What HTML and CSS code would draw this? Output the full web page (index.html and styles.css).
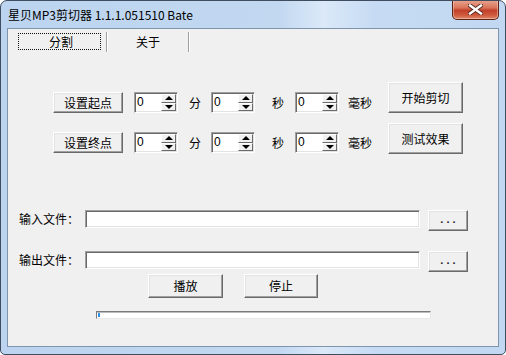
FILE: index.html
```html
<!DOCTYPE html>
<html lang="zh-CN">
<head>
<meta charset="utf-8">
<title>星贝MP3剪切器</title>
<link rel="stylesheet" href="styles.css">
</head>
<body>
<div class="window">
  <div class="titlebar">
    <span class="title">星贝MP3剪切器 1.1.1.051510 Bate</span>
    <div class="close">
      <svg width="15" height="11" viewBox="0 0 15 11">
        <path d="M2 1.5 L13 9.5 M13 1.5 L2 9.5" stroke="#5a2a20" stroke-width="4.2" stroke-linecap="square" fill="none"/>
        <path d="M2 1.5 L13 9.5 M13 1.5 L2 9.5" stroke="#ffffff" stroke-width="2.4" stroke-linecap="square" fill="none"/>
      </svg>
    </div>
  </div>
  <div class="client">
    <div class="tabs">
      <div class="tab tab-active"><span>分割</span></div>
      <div class="tab-sep"></div>
      <div class="tab tab-plain">关于</div>
      <div class="tab-sep tab-sep-last"></div>
    </div>

    <div class="cut">
      <div class="points">
        <div class="point-row">
          <div class="btn btn-point">设置起点</div>
          <div class="spin spin-a"><span class="spin-val">0</span><div class="spin-btns"><div class="spin-up"></div><div class="spin-down"></div></div></div>
          <span class="unit unit-min">分</span>
          <div class="spin spin-b"><span class="spin-val">0</span><div class="spin-btns"><div class="spin-up"></div><div class="spin-down"></div></div></div>
          <span class="unit unit-sec">秒</span>
          <div class="spin spin-c"><span class="spin-val">0</span><div class="spin-btns"><div class="spin-up"></div><div class="spin-down"></div></div></div>
          <span class="unit unit-ms">毫秒</span>
        </div>
        <div class="point-row">
          <div class="btn btn-point">设置终点</div>
          <div class="spin spin-a"><span class="spin-val">0</span><div class="spin-btns"><div class="spin-up"></div><div class="spin-down"></div></div></div>
          <span class="unit unit-min">分</span>
          <div class="spin spin-b"><span class="spin-val">0</span><div class="spin-btns"><div class="spin-up"></div><div class="spin-down"></div></div></div>
          <span class="unit unit-sec">秒</span>
          <div class="spin spin-c"><span class="spin-val">0</span><div class="spin-btns"><div class="spin-up"></div><div class="spin-down"></div></div></div>
          <span class="unit unit-ms">毫秒</span>
        </div>
      </div>
      <div class="actions">
        <div class="btn btn-action">开始剪切</div>
        <div class="btn btn-action">测试效果</div>
      </div>
    </div>

    <div class="file-row file-row-in">
      <span class="file-label">输入文件：</span>
      <div class="field file-field"></div>
      <div class="btn btn-browse">. . .</div>
    </div>
    <div class="file-row file-row-out">
      <span class="file-label">输出文件：</span>
      <div class="field file-field"></div>
      <div class="btn btn-browse">. . .</div>
    </div>

    <div class="play-row">
      <div class="btn btn-play">播放</div>
      <div class="btn btn-play btn-stop">停止</div>
    </div>

    <div class="progress"><div class="progress-fill"></div></div>
  </div>
</div>
</body>
</html>
```

FILE: styles.css
```css
html, body {
  margin: 0;
  padding: 0;
  background: #ffffff;
}

body {
  width: 506px;
  height: 355px;
  overflow: hidden;
  font-family: "Noto Sans CJK SC", "Liberation Sans", sans-serif;
  font-size: 12px;
  color: #000;
}

.window {
  box-sizing: border-box;
  width: 506px;
  height: 355px;
  border: 1px solid #3f4d5e;
  border-radius: 7px 7px 5px 5px;
  background: linear-gradient(to right, #bcd4ef 0%, #c2d8f1 55%, #dbe9f8 64%, #c6dbf3 74%, #c2d8f2 100%);
  display: flex;
  flex-direction: column;
  overflow: hidden;
}

.titlebar {
  height: 27px;
  display: flex;
  align-items: flex-start;
  padding-left: 7px;
  flex: none;
}

.title {
  margin-top: 6px;
  font-size: 12px;
  line-height: 16px;
  color: #000;
  white-space: nowrap;
}

.close {
  margin-left: auto;
  margin-right: 6px;
  margin-top: -1px;
  width: 47px;
  height: 20px;
  box-sizing: border-box;
  border: 1px solid #5b2419;
  border-top: none;
  border-radius: 0 0 5px 5px;
  background: linear-gradient(to bottom, #e9a692 0%, #d9755c 40%, #c2412a 55%, #cf5a3d 80%, #e08a6c 100%);
  box-shadow: inset 0 0 0 1px rgba(255, 220, 200, 0.45);
  display: flex;
  align-items: center;
  justify-content: center;
}

.client {
  margin: 0 6px 7px 6px;
  height: 319px;
  box-sizing: border-box;
  border: 1px solid #7f94ad;
  background: #f0f0f0;
  flex: none;
}

/* tabs */
.tabs {
  height: 24px;
  display: flex;
  align-items: flex-start;
  padding-left: 10px;
}

.tab {
  height: 17px;
  box-sizing: border-box;
  display: flex;
  align-items: center;
  justify-content: center;
  line-height: 1;
}

.tab-active {
  margin-top: 4px;
  width: 83px;
  border: 1px dotted #111;
  padding-left: 3px;
}

.tab-sep {
  margin-top: 3px;
  margin-left: 5px;
  width: 1px;
  height: 20px;
  background: #a0a0a0;
  border-right: 1px solid #ffffff;
}

.tab-sep-last {
  margin-left: 0;
}

.tab-plain {
  margin-top: 4px;
  width: 80px;
}

/* cut section */
.cut {
  margin-top: 29px;
  display: flex;
  align-items: flex-start;
}

.points {
  padding-left: 45px;
  margin-top: 10px;
  display: flex;
  flex-direction: column;
  gap: 19px;
}

.point-row {
  display: flex;
  align-items: center;
  height: 21px;
}

.btn {
  box-sizing: border-box;
  background: #f0f0f0;
  border: 1px solid;
  border-color: #ffffff #696969 #696969 #ffffff;
  box-shadow: inset -1px -1px 0 #a0a0a0, inset 1px 1px 0 #e3e3e3;
  display: flex;
  align-items: center;
  justify-content: center;
  line-height: 1;
  font-size: 12px;
}

.btn-point {
  width: 70px;
  height: 21px;
}

.spin {
  box-sizing: border-box;
  width: 44px;
  height: 21px;
  margin-left: 11px;
  background: #ffffff;
  border: 1px solid;
  border-color: #a0a0a0 #ffffff #ffffff #a0a0a0;
  box-shadow: inset 1px 1px 0 #696969, inset -1px -1px 0 #e3e3e3;
  display: flex;
  align-items: stretch;
  padding: 1px 1px 1px 2px;
}

.spin-b { margin-left: 10px; }
.spin-c { margin-left: 11px; }

.spin-val {
  flex: 1;
  font-size: 12px;
  line-height: 17px;
  font-family: "Liberation Sans", sans-serif;
}

.spin-btns {
  width: 15px;
  display: flex;
  flex-direction: column;
}

.spin-up, .spin-down {
  flex: 1;
  box-sizing: border-box;
  background: #f0f0f0;
  border: 1px solid;
  border-color: #ffffff #696969 #696969 #ffffff;
  display: flex;
  align-items: center;
  justify-content: center;
}

.spin-up::before {
  content: "";
  width: 0;
  height: 0;
  border-left: 4px solid transparent;
  border-right: 4px solid transparent;
  border-bottom: 4px solid #000;
}

.spin-down::before {
  content: "";
  width: 0;
  height: 0;
  border-left: 4px solid transparent;
  border-right: 4px solid transparent;
  border-top: 4px solid #000;
}

.unit {
  line-height: 1;
  white-space: nowrap;
}

.unit-min { margin-left: 11px; width: 12px; }
.unit-sec { margin-left: 17px; width: 12px; }
.unit-ms { margin-left: 9px; width: 24px; }

.actions {
  margin-left: 16px;
  display: flex;
  flex-direction: column;
  gap: 10px;
}

.btn-action {
  width: 75px;
  height: 31px;
}

/* file rows */
.file-row {
  display: flex;
  align-items: flex-start;
  padding-left: 11px;
}

.file-row-in { margin-top: 56px; }
.file-row-out { margin-top: 20px; }

.file-label {
  width: 66px;
  line-height: 18px;
  white-space: nowrap;
}

.field {
  box-sizing: border-box;
  background: #ffffff;
  border: 1px solid;
  border-color: #a0a0a0 #ffffff #ffffff #a0a0a0;
  box-shadow: inset 1px 1px 0 #696969, inset -1px -1px 0 #e3e3e3;
}

.file-field {
  width: 335px;
  height: 18px;
}

.btn-browse {
  margin-left: 8px;
  width: 40px;
  height: 21px;
  align-items: flex-end;
  padding-bottom: 5px;
  font-family: "Liberation Sans", sans-serif;
  font-size: 11px;
  font-weight: bold;
  color: #222;
}

/* play row */
.play-row {
  margin-top: 2px;
  padding-left: 140px;
  display: flex;
}

.btn-play {
  width: 75px;
  height: 24px;
}

.btn-stop {
  margin-left: 21px;
  width: 74px;
}

/* progress */
.progress {
  margin-top: 13px;
  margin-left: 88px;
  width: 335px;
  height: 8px;
  box-sizing: border-box;
  background: #ffffff;
  border: 1px solid;
  border-color: #7a7a7a #e8e8e8 #e8e8e8 #7a7a7a;
  box-shadow: inset 0 1px 0 #bcbcbc;
  padding: 1px 0 1px 1px;
  display: flex;
}

.progress-fill {
  width: 2px;
  height: 4px;
  background: #2f8fe6;
}
```
